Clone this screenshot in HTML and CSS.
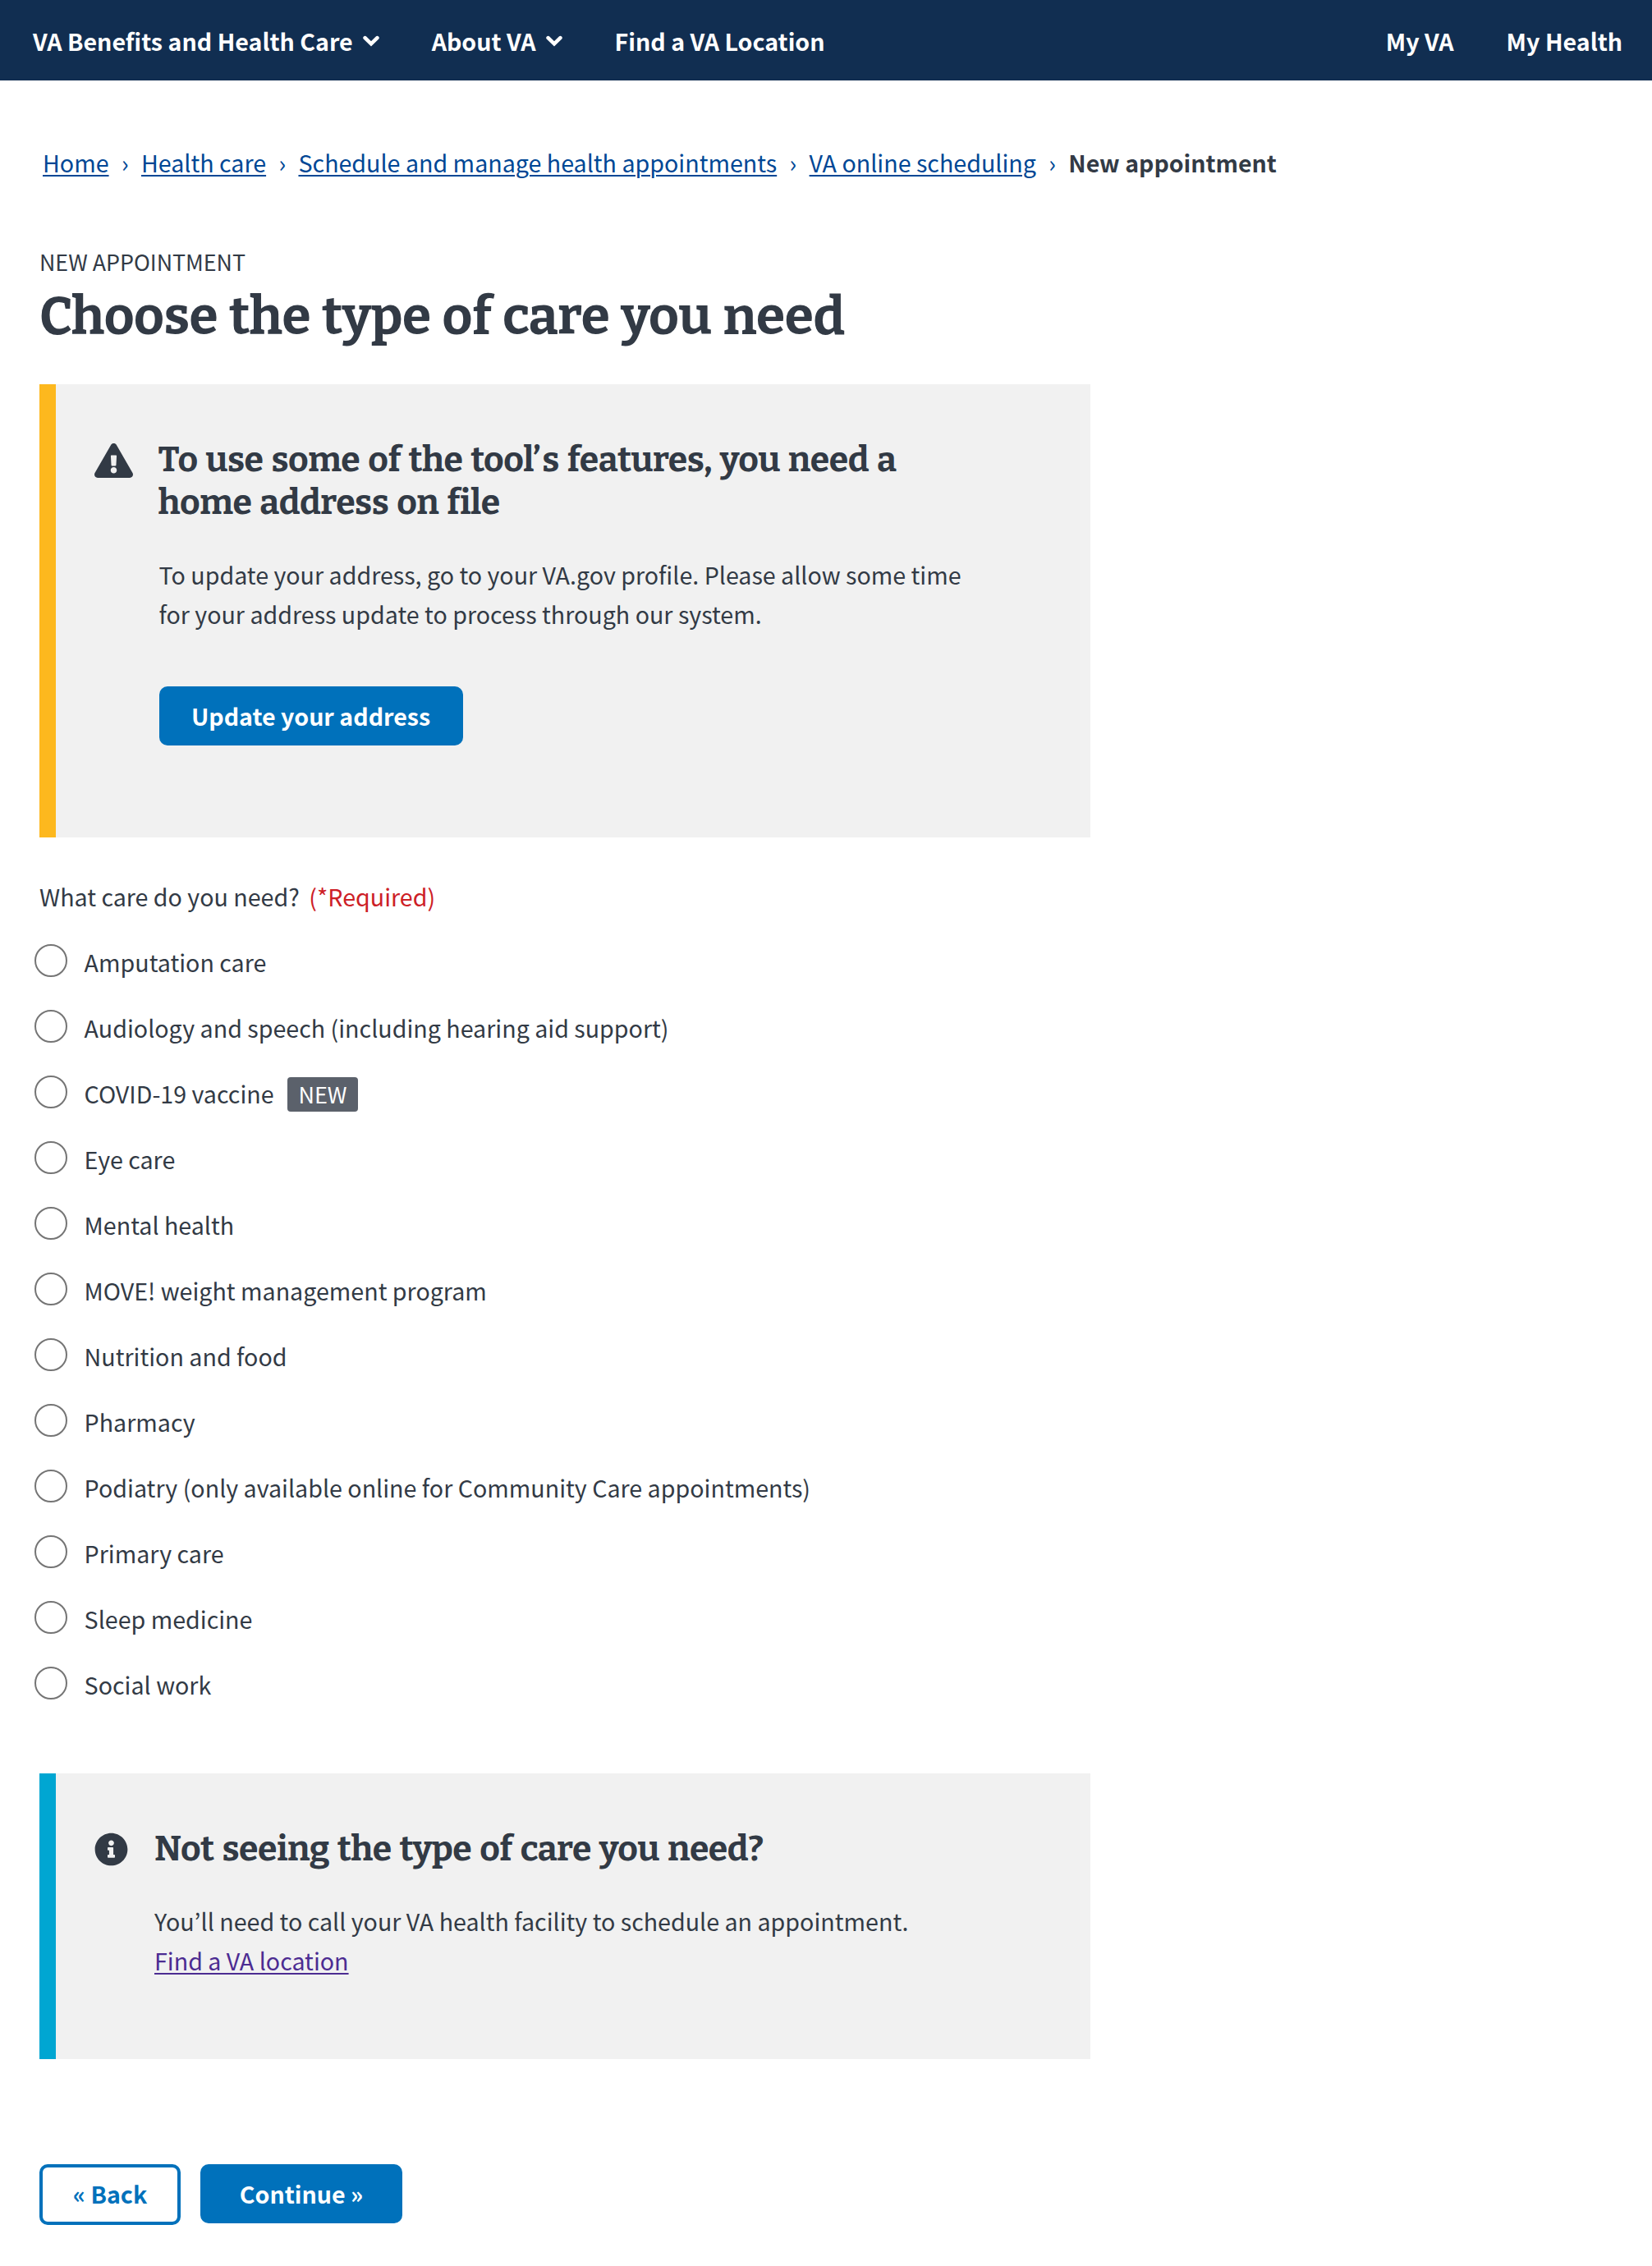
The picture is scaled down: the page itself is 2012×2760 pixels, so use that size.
FILE: index.html
```html
<!DOCTYPE html>
<html lang="en">
<head>
<meta charset="utf-8">
<title>Choose the type of care you need</title>
<link rel="stylesheet" href="styles.css">
</head>
<body>
<nav class="topnav">
  <a class="nav-link">VA Benefits and Health Care<svg class="chevron" viewBox="0 0 20 14"><path d="M2.6 3.2 10 10.4l7.4-7.2"/></svg></a>
  <a class="nav-link">About VA<svg class="chevron" viewBox="0 0 20 14"><path d="M2.6 3.2 10 10.4l7.4-7.2"/></svg></a>
  <a class="nav-link">Find a VA Location</a>
  <a class="nav-link nav-right">My VA</a>
  <a class="nav-link">My Health</a>
</nav>
<div class="breadcrumbs">
  <a class="crumb">Home</a><span class="sep">›</span><a class="crumb">Health care</a><span class="sep">›</span><a class="crumb">Schedule and manage health appointments</a><span class="sep">›</span><a class="crumb">VA online scheduling</a><span class="sep">›</span><strong class="current">New appointment</strong>
</div>
<main class="main">
  <div class="eyebrow">NEW APPOINTMENT</div>
  <h1 class="title">Choose the type of care you need</h1>
  <section class="alert warning">
    <svg class="alert-icon" viewBox="0 0 576 512"><path d="M569.5 440C588 472 564.8 512 527.900 512H48.100c-36.900 0-60-40.100-41.600-72L246.400 24c18.500-32 64.700-32 83.200 0l239.900 416zM288 354c-25.400 0-46 20.600-46 46s20.600 46 46 46 46-20.600 46-46-20.600-46-46-46zm-43.700-165.300l7.400 136c.3 6.400 5.600 11.300 12 11.300h48.500c6.400 0 11.600-5 12-11.300l7.400-136c.4-6.900-5.100-12.700-12-12.700h-63.400c-6.900 0-12.400 5.800-12 12.700z"/></svg>
    <div class="alert-body">
      <h3 class="alert-title">To use some of the tool<span class="apos">’</span>s features, you need a<br>home address on file</h3>
      <p class="alert-text">To update your address, go to your VA.gov profile. Please allow some time<br>for your address update to process through our system.</p>
      <button class="btn update">Update your address</button>
    </div>
  </section>
  <div class="question">What care do you need?<span class="required">(*Required)</span></div>
  <div class="options">
    <label class="option"><i class="radio"></i>Amputation care</label>
    <label class="option"><i class="radio"></i>Audiology and speech (including hearing aid support)</label>
    <label class="option"><i class="radio"></i>COVID-19 vaccine<span class="badge">NEW</span></label>
    <label class="option"><i class="radio"></i>Eye care</label>
    <label class="option"><i class="radio"></i>Mental health</label>
    <label class="option"><i class="radio"></i>MOVE! weight management program</label>
    <label class="option"><i class="radio"></i>Nutrition and food</label>
    <label class="option"><i class="radio"></i>Pharmacy</label>
    <label class="option"><i class="radio"></i>Podiatry (only available online for Community Care appointments)</label>
    <label class="option"><i class="radio"></i>Primary care</label>
    <label class="option"><i class="radio"></i>Sleep medicine</label>
    <label class="option"><i class="radio"></i>Social work</label>
  </div>
  <section class="alert info">
    <svg class="alert-icon" viewBox="0 0 512 512"><path d="M256 8C119 8 8 119.100 8 256c0 137 111 248 248 248s248-111 248-248C504 119.100 393 8 256 8zm0 110c23.200 0 42 18.800 42 42s-18.800 42-42 42-42-18.800-42-42 18.800-42 42-42zm56 254c0 6.600-5.400 12-12 12h-88c-6.600 0-12-5.400-12-12v-24c0-6.600 5.400-12 12-12h12v-64h-12c-6.600 0-12-5.400-12-12v-24c0-6.600 5.400-12 12-12h64c6.600 0 12 5.400 12 12v100h12c6.600 0 12 5.400 12 12v24z"/></svg>
    <div class="alert-body">
      <h3 class="alert-title">Not seeing the type of care you need?</h3>
      <p class="alert-text">You’ll need to call your VA health facility to schedule an appointment.<br><a class="visited">Find a VA location</a></p>
    </div>
  </section>
  <div class="actions">
    <button class="btn back">« Back</button>
    <button class="btn continue">Continue »</button>
  </div>
</main>
</body>
</html>
```
FILE: styles.css
```css
* { box-sizing: border-box; }

body {
  margin: 0;
  background: #fff;
  color: #323a45;
  font-family: "Noto Sans CJK KR", "Noto Sans", sans-serif;
  font-size: 28.64px;
  line-height: 48px;
}

.topnav {
  display: flex;
  align-items: center;
  height: 98px;
  padding: 1px 36px 0 40px;
  background: #112e51;
  color: #fff;
  font-weight: 700;
  font-size: 28.6px;
}
.nav-link { display: flex; align-items: center; margin-right: 64px; white-space: nowrap; }
.nav-link:last-child { margin-right: 0; }
.nav-right { margin-left: auto; }
.chevron {
  width: 20px;
  height: 14px;
  margin-left: 12px;
  fill: none;
  stroke: #fff;
  stroke-width: 4.6;
  stroke-linecap: round;
}

.breadcrumbs {
  display: flex;
  padding: 76px 0 0 52px;
  color: #004795;
}
.crumb { text-decoration: underline; text-decoration-thickness: 2px; text-underline-offset: 3px; }
.sep { width: 39.4px; text-align: center; }
.current { color: #323a45; font-size: 28.5px; }

.main { padding: 73px 0 50px 48px; }
.eyebrow { font-size: 26.8px; }
.title {
  margin: 0 0 40px;
  padding-top: 1px;
  font-family: Bitter, "DejaVu Serif Condensed", serif;
  font-size: 64px;
  line-height: 84px;
  letter-spacing: -0.5px;
  word-spacing: 2.9px;
}

.alert {
  display: flex;
  width: 1280px;
  border-left: 20px solid;
  background: #f1f1f1;
}
.alert-icon { flex: none; fill: #323a45; }
.alert-title {
  margin: 0;
  font-family: Bitter, "DejaVu Serif Condensed", serif;
  font-size: 42.7px;
  line-height: 52px;
  letter-spacing: -0.5px;
  word-spacing: 2.8px;
  color: #323a45;
}
.warning .alert-title { margin-left: -1px; }
.apos { margin: 0 2px 0 0; }
.alert-text { margin: 38px 0 0; }
.warning { height: 552px; padding: 66px 0 0 47px; border-color: #fdb81e; }
.warning .alert-icon { width: 47px; height: 42px; margin: 6px 31.5px 0 0; }
.info { height: 348px; padding: 66px 0 0 47px; border-color: #00a6d2; }
.info .alert-icon { width: 41px; height: 41px; margin: 6px 32px 0 0; }
.visited { color: #4c2c92; text-decoration: underline; text-decoration-thickness: 2px; text-underline-offset: 3px; }

.btn {
  height: 72px;
  padding: 0;
  border: 0;
  border-radius: 10px;
  background: #0071bb;
  color: #fff;
  font: 700 28.6px/48px "Noto Sans CJK KR", "Noto Sans", sans-serif;
}
.update { display: block; width: 370px; margin-top: 64px; }

.question { margin-top: 48px; }
.required { margin-left: 11.5px; color: #cd2026; }

.options { margin: 24px 0 0 -6px; }
.option { display: flex; height: 80px; padding-top: 8px; }
.radio {
  width: 40px;
  height: 40px;
  margin: 2px 20.6px 0 0;
  border: 2px solid #757575;
  border-radius: 50%;
}
.badge {
  height: 42px;
  width: 86px;
  margin: 4px 0 0 16.4px;
  border-radius: 4px;
  background: #5b616b;
  color: #fff;
  font-size: 27px;
  line-height: 42px;
  text-align: center;
}

.options + .info { margin-top: 60px; }

.actions { display: flex; gap: 24px; margin-top: 128px; }
.back { width: 172px; height: 74px; padding: 0 0 2px; border: 4px solid #0071bb; background: #fff; color: #0071bb; }
.continue { width: 246px; }
```
